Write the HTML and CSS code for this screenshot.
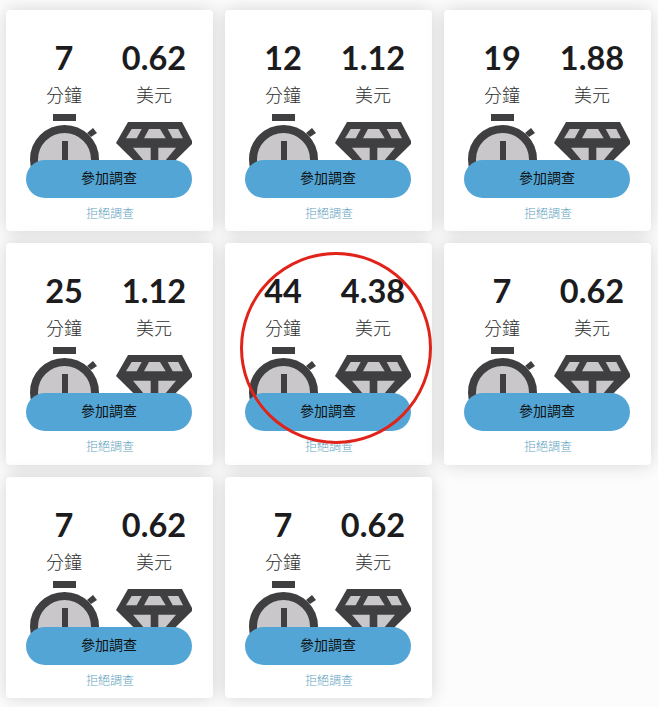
FILE: index.html
```html
<!DOCTYPE html>
<html lang="zh-Hant">
<head>
<meta charset="utf-8">
<title>調查</title>
<link rel="stylesheet" href="styles.css">
</head>
<body>
<svg class="defs" width="0" height="0" aria-hidden="true">
  <symbol id="watch" viewBox="0 0 76 70">
    <rect class="dark" x="27" y="0" width="23" height="7"/>
    <polygon class="dark" points="61,19 67,14 71,19 65,23"/>
    <circle class="face" cx="38.5" cy="45.5" r="30.5"/>
    <rect class="dark" x="36" y="27" width="6" height="24"/>
  </symbol>
  <symbol id="gem" viewBox="0 0 76 70">
    <polygon class="dark" points="12,8 66,8 77,29 38.5,67 0,29"/>
    <polygon class="light" points="15.7,15 25.7,15 20.7,24.3 10,24.3"/>
    <polygon class="light" points="33,15 44,15 49.7,24.3 28,24.3"/>
    <polygon class="light" points="51.7,15 62.3,15 67,24.3 56.7,24.3"/>
    <polygon class="light" points="17,33.7 34.7,33.7 34.7,55"/>
    <polygon class="light" points="42.3,33.7 60,33.7 42.3,55"/>
  </symbol>
</svg>
<main class="grid">
  <article class="card">
    <div class="stats"><div class="stat"><b>7</b><span>分鐘</span><svg class="icon"><use href="#watch"/></svg></div><div class="stat"><b>0.62</b><span>美元</span><svg class="icon"><use href="#gem"/></svg></div></div>
    <button class="join">參加調查</button><a class="decline">拒絕調查</a>
  </article>
  <article class="card">
    <div class="stats"><div class="stat"><b>12</b><span>分鐘</span><svg class="icon"><use href="#watch"/></svg></div><div class="stat"><b>1.12</b><span>美元</span><svg class="icon"><use href="#gem"/></svg></div></div>
    <button class="join">參加調查</button><a class="decline">拒絕調查</a>
  </article>
  <article class="card">
    <div class="stats"><div class="stat"><b>19</b><span>分鐘</span><svg class="icon"><use href="#watch"/></svg></div><div class="stat"><b>1.88</b><span>美元</span><svg class="icon"><use href="#gem"/></svg></div></div>
    <button class="join">參加調查</button><a class="decline">拒絕調查</a>
  </article>
  <article class="card">
    <div class="stats"><div class="stat"><b>25</b><span>分鐘</span><svg class="icon"><use href="#watch"/></svg></div><div class="stat"><b>1.12</b><span>美元</span><svg class="icon"><use href="#gem"/></svg></div></div>
    <button class="join">參加調查</button><a class="decline">拒絕調查</a>
  </article>
  <article class="card">
    <div class="stats"><div class="stat"><b>44</b><span>分鐘</span><svg class="icon"><use href="#watch"/></svg></div><div class="stat"><b>4.38</b><span>美元</span><svg class="icon"><use href="#gem"/></svg></div></div>
    <button class="join">參加調查</button><a class="decline">拒絕調查</a>
    <div class="ring"></div>
  </article>
  <article class="card">
    <div class="stats"><div class="stat"><b>7</b><span>分鐘</span><svg class="icon"><use href="#watch"/></svg></div><div class="stat"><b>0.62</b><span>美元</span><svg class="icon"><use href="#gem"/></svg></div></div>
    <button class="join">參加調查</button><a class="decline">拒絕調查</a>
  </article>
  <article class="card">
    <div class="stats"><div class="stat"><b>7</b><span>分鐘</span><svg class="icon"><use href="#watch"/></svg></div><div class="stat"><b>0.62</b><span>美元</span><svg class="icon"><use href="#gem"/></svg></div></div>
    <button class="join">參加調查</button><a class="decline">拒絕調查</a>
  </article>
  <article class="card">
    <div class="stats"><div class="stat"><b>7</b><span>分鐘</span><svg class="icon"><use href="#watch"/></svg></div><div class="stat"><b>0.62</b><span>美元</span><svg class="icon"><use href="#gem"/></svg></div></div>
    <button class="join">參加調查</button><a class="decline">拒絕調查</a>
  </article>
</main>
</body>
</html>
```
FILE: styles.css
```css
* { box-sizing: border-box; }
html, body { margin: 0; padding: 0; background: #fdfcfd; }
body { width: 658px; height: 707px; overflow: hidden; font-family: "Noto Sans CJK TC", sans-serif; }
.defs { display: block; height: 0; }
.grid {
  display: grid;
  grid-template-columns: repeat(3, 207px);
  grid-template-rows: 221px 222px 221px;
  gap: 12px;
  padding: 10px 0 0 6px;
}
.card {
  position: relative;
  background: #fff;
  border-radius: 4px;
  box-shadow: 0 0 18px rgba(0, 0, 0, .16);
  padding: 28px 0 0 13px;
  display: flex;
  flex-direction: column;
  align-items: flex-start;
}
.stats { display: grid; grid-template-columns: 90px 90px; width: 180px; }
.stat { display: flex; flex-direction: column; align-items: center; }
.stat b { font: 700 32.5px/40px Lato, sans-serif; color: #1c1c1e; }
.stat span { font: 300 18px/26px "Noto Sans CJK TC", sans-serif; color: #2e2e2e; margin-top: 3px; }
.icon { width: 76px; height: 70px; margin-top: 7px; flex: none; overflow: visible; }
.dark { fill: #3f3f41; }
.light { fill: #c9c7c9; }
.face { fill: #c9c7c9; stroke: #3f3f41; stroke-width: 8; }
.join {
  width: 166px;
  height: 38px;
  margin: -24px 0 0 7px;
  position: relative;
  border: 0;
  border-radius: 19px;
  background: #52a5d5;
  color: #111;
  font: 400 14px/32px "Noto Sans CJK TC", sans-serif;
  padding: 0 0 5px;
}
.decline { margin: 6px 0 0 67px; font: 300 12px/18px "Noto Sans CJK TC", sans-serif; color: #5f9fc0; }
.ring {
  position: absolute;
  left: 15px;
  top: 9px;
  width: 192px;
  height: 192px;
  border: 3.5px solid #e2231a;
  border-radius: 50%;
}
```
